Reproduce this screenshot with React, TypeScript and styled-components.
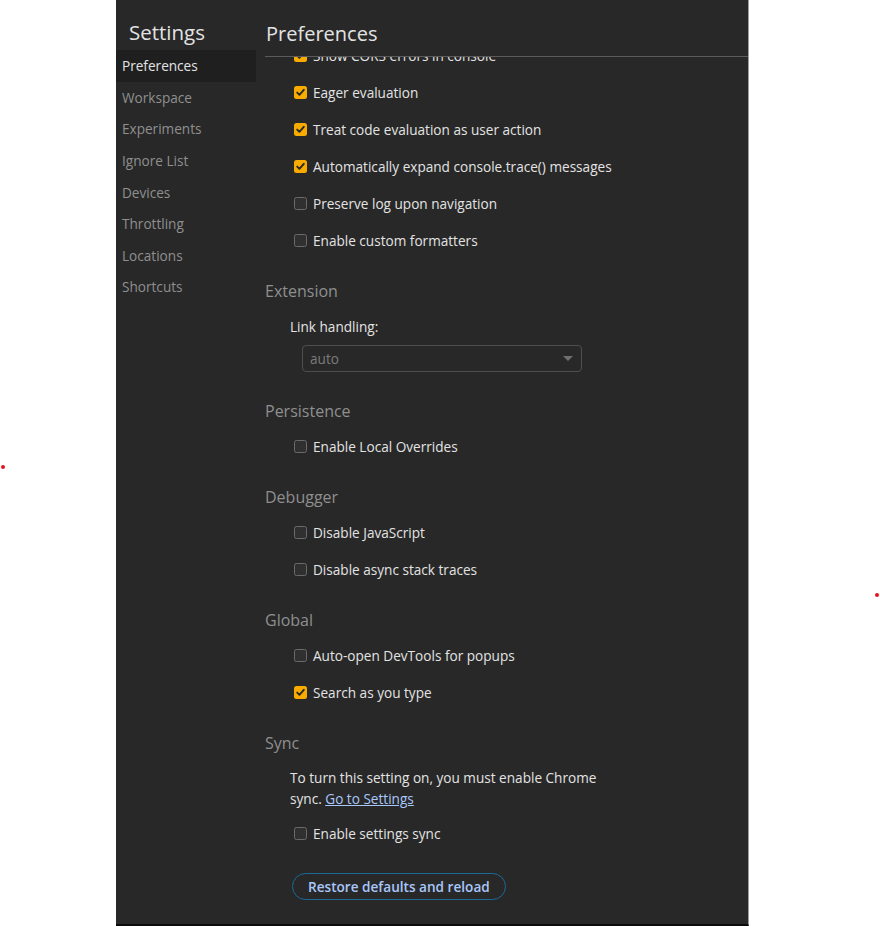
import React, { useLayoutEffect, useRef } from "react";
import styled, { createGlobalStyle } from "styled-components";

const Global = createGlobalStyle`
  html, body { margin: 0; padding: 0; background: #ffffff; }
  body { font-family: "Open Sans", "Noto Sans", "Liberation Sans", sans-serif; }
  * { box-sizing: border-box; }
`;

const Page = styled.div`
  position: relative;
  width: 880px;
  height: 926px;
  padding-left: 116px;
  background: #ffffff;
  overflow: hidden;
`;

const Dot = styled.span<{ $x: number; $y: number }>`
  position: absolute;
  left: ${(p) => p.$x}px;
  top: ${(p) => p.$y}px;
  width: 4px;
  height: 4px;
  border-radius: 50%;
  background: #e3131d;
`;

const Panel = styled.div`
  width: 633px;
  height: 926px;
  display: flex;
  background: #282828;
  border-right: 1px solid #9d9d9d;
  border-bottom: 2px solid #0b0b0b;
  overflow: hidden;
  color: #e3e3e3;
  font-size: 13.6px;
`;

const Sidebar = styled.nav`
  width: 140px;
  flex: none;
  display: flex;
  flex-direction: column;
`;

const SideTitle = styled.div`
  height: 50px;
  padding: 19px 0 0 13px;
  font-size: 20.5px;
  line-height: 26px;
  color: #e3e3e3;
`;

const SideItem = styled.div<{ $active?: boolean }>`
  height: 31.6px;
  display: flex;
  align-items: center;
  padding-left: 6px;
  font-size: 13.6px;
  color: ${(p) => (p.$active ? "#e3e3e3" : "#8f8f8f")};
  background: ${(p) => (p.$active ? "#1f1f1f" : "transparent")};
`;

const Main = styled.div`
  flex: 1;
  min-width: 0;
  display: flex;
  flex-direction: column;
`;

const Header = styled.div`
  height: 57px;
  margin-left: 9px;
  padding: 20px 0 0 1px;
  border-bottom: 1px solid #5b5b5b;
  font-size: 20px;
  line-height: 28px;
  color: #e3e3e3;
  flex: none;
`;

const Scroller = styled.div`
  position: relative;
  flex: 1;
  min-height: 0;
  overflow: hidden;
  padding: 0 0 26px 9px;
`;

const Section = styled.section<{ $gap?: number }>`
  & + & {
    margin-top: ${(p) => p.$gap ?? 19.3}px;
  }
`;

const SectionTitle = styled.h2`
  margin: 0 0 5px;
  height: 24px;
  font-size: 16px;
  line-height: 24px;
  font-weight: 400;
  color: #8f8f8f;
`;

const Row = styled.label`
  height: 37px;
  display: flex;
  align-items: center;
  padding-left: 29px;
  gap: 6px;
  color: #e3e3e3;
`;

const Box = styled.span<{ $checked?: boolean }>`
  width: 13px;
  height: 13px;
  flex: none;
  border-radius: 2.5px;
  display: flex;
  align-items: center;
  justify-content: center;
  background: ${(p) => (p.$checked ? "#f9ab00" : "#303030")};
  border: ${(p) => (p.$checked ? "none" : "1.5px solid #6a6a6a")};
`;

const FieldLabel = styled.div`
  height: 37px;
  display: flex;
  align-items: center;
  padding-left: 25px;
  color: #e3e3e3;
`;

const SelectBox = styled.div`
  margin: 0 0 27px 37px;
  width: 280px;
  height: 27px;
  border: 1px solid #4e4e4e;
  border-radius: 4px;
  display: flex;
  align-items: center;
  justify-content: space-between;
  padding: 0 8px 0 7px;
  color: #7c7c7c;
`;

const Caret = styled.span`
  width: 0;
  height: 0;
  border-left: 5px solid transparent;
  border-right: 5px solid transparent;
  border-top: 5px solid #6e6e6e;
`;

const Note = styled.p`
  margin: 11.5px 0 0;
  padding-left: 25px;
  max-width: 360px;
  line-height: 21px;
  color: #e3e3e3;
`;

const Link = styled.a`
  color: #a8c7fa;
  text-decoration: underline;
  cursor: pointer;
`;

const SyncRow = styled(Row)`
  margin-top: 6px;
`;

const RestoreButton = styled.button`
  margin: 21.5px 0 0 27px;
  height: 27px;
  padding: 0 15px;
  border: 1px solid #1b6b99;
  border-radius: 14px;
  background: transparent;
  color: #a8c7fa;
  font-family: inherit;
  font-size: 13.6px;
  font-weight: 600;
  display: flex;
  align-items: center;
`;

function Check({ checked, label, rowRef }: { checked?: boolean; label: string; rowRef?: React.Ref<HTMLLabelElement> }) {
  return (
    <Row ref={rowRef}>
      <Box $checked={checked}>
        {checked && (
          <svg width="11" height="11" viewBox="0 0 11 11">
            <path d="M2.2 5.6 L4.4 7.8 L8.8 2.8" fill="none" stroke="#2a2a2a" strokeWidth="1.9" strokeLinecap="round" strokeLinejoin="round" />
          </svg>
        )}
      </Box>
      <span>{label}</span>
    </Row>
  );
}

const navItems = ["Preferences", "Workspace", "Experiments", "Ignore List", "Devices", "Throttling", "Locations", "Shortcuts"];

export default function App() {
  const scrollRef = useRef<HTMLDivElement>(null);
  const corsRef = useRef<HTMLLabelElement>(null);

  useLayoutEffect(() => {
    const s = scrollRef.current;
    const r = corsRef.current;
    if (s && r) {
      s.scrollTop = r.offsetTop + 19.5;
    }
  }, []);

  return (
    <Page>
      <Global />
      <Dot $x={1} $y={465} />
      <Dot $x={875} $y={593} />
      <Panel>
        <Sidebar>
          <SideTitle>Settings</SideTitle>
          {navItems.map((n, i) => (
            <SideItem key={n} $active={i === 0}>
              {n}
            </SideItem>
          ))}
        </Sidebar>
        <Main>
          <Header>Preferences</Header>
          <Scroller ref={scrollRef}>
            <Section>
              <SectionTitle>Console</SectionTitle>
              <Check label="Hide network messages" />
              <Check label="Selected context only" />
              <Check label="Log XMLHttpRequests" />
              <Check label="Show timestamps" />
              <Check checked label="Autocomplete from history" />
              <Check checked label="Accept autocomplete suggestion on Enter" />
              <Check checked label="Group similar messages in console" />
              <Check checked label="Show CORS errors in console" rowRef={corsRef} />
              <Check checked label="Eager evaluation" />
              <Check checked label="Treat code evaluation as user action" />
              <Check checked label="Automatically expand console.trace() messages" />
              <Check label="Preserve log upon navigation" />
              <Check label="Enable custom formatters" />
            </Section>
            <Section $gap={20}>
              <SectionTitle>Extension</SectionTitle>
              <FieldLabel>Link handling:</FieldLabel>
              <SelectBox>
                <span>auto</span>
                <Caret />
              </SelectBox>
            </Section>
            <Section>
              <SectionTitle>Persistence</SectionTitle>
              <Check label="Enable Local Overrides" />
            </Section>
            <Section>
              <SectionTitle>Debugger</SectionTitle>
              <Check label="Disable JavaScript" />
              <Check label="Disable async stack traces" />
            </Section>
            <Section>
              <SectionTitle>Global</SectionTitle>
              <Check label="Auto-open DevTools for popups" />
              <Check checked label="Search as you type" />
            </Section>
            <Section>
              <SectionTitle>Sync</SectionTitle>
              <Note>
                To turn this setting on, you must enable Chrome sync. <Link>Go to Settings</Link>
              </Note>
              <SyncRow>
                <Box />
                <span>Enable settings sync</span>
              </SyncRow>
              <RestoreButton>Restore defaults and reload</RestoreButton>
            </Section>
          </Scroller>
        </Main>
      </Panel>
    </Page>
  );
}
